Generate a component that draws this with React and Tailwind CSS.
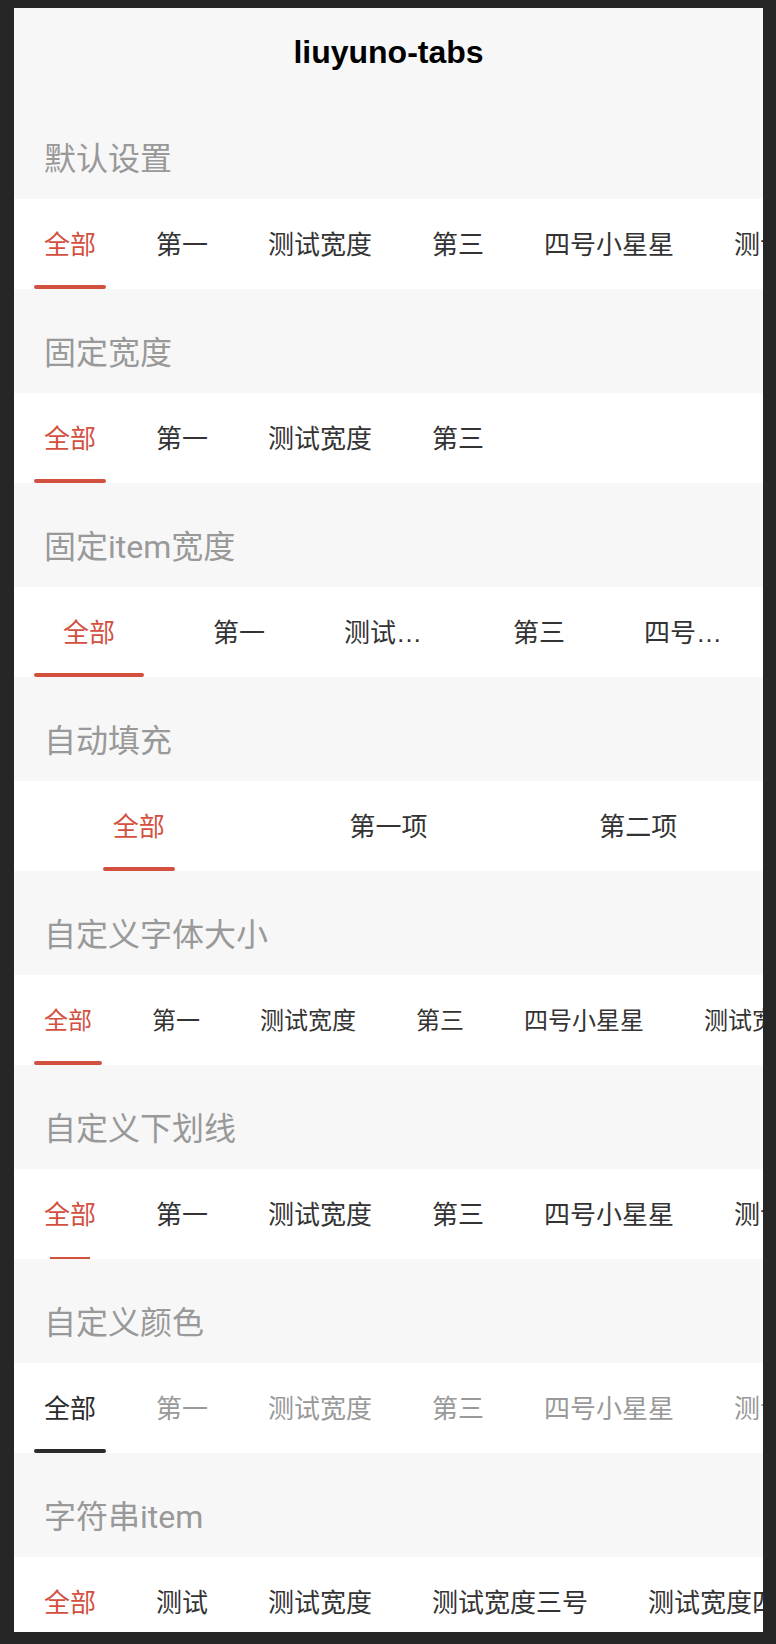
import React from "react";

const FONT = { fontFamily: 'Roboto, "Noto Sans CJK SC", "Noto Sans", sans-serif' };
const ELLIPSIS_FONT = { fontFamily: '"Liberation Sans", "Noto Sans CJK SC", sans-serif' };

const RED = "text-[#d3503f]";

function Label({ children }) {
  return (
    <div className="h-[104px] pt-[44px] pl-[30px] text-[32px] leading-[40px] text-[#999999]">
      {children}
    </div>
  );
}

function DefaultTabs({ items, size = "text-[26px]" }) {
  return (
    <div className="h-[90px] bg-white flex overflow-hidden">
      {items.map((t, i) => (
        <div
          key={i}
          className={`relative shrink-0 mx-[20px] px-[10px] pt-[2px] h-full flex items-center whitespace-nowrap ${size} leading-[36px] ${
            i === 0 ? RED : "text-[#333333]"
          }`}
        >
          {t}
          {i === 0 && (
            <div className="absolute bottom-0 left-0 right-0 h-[4px] rounded-full bg-[#d3503f]" />
          )}
        </div>
      ))}
    </div>
  );
}

function FixedItemTabs({ items }) {
  return (
    <div className="h-[90px] bg-white flex overflow-hidden">
      {items.map((t, i) => (
        <div
          key={i}
          className={`relative shrink-0 w-[110px] mx-[20px] px-[10px] pt-[2px] h-full flex items-center justify-center text-[26px] leading-[36px] ${
            i === 0 ? RED : "text-[#333333]"
          }`}
        >
          <span
            className="block w-full overflow-hidden text-ellipsis whitespace-nowrap text-center"
            style={ELLIPSIS_FONT}
          >
            {t}
          </span>
          {i === 0 && (
            <div className="absolute bottom-0 left-0 right-0 h-[4px] rounded-full bg-[#d3503f]" />
          )}
        </div>
      ))}
    </div>
  );
}

function FillTabs({ items }) {
  return (
    <div className="h-[90px] bg-white flex overflow-hidden">
      {items.map((t, i) => (
        <div key={i} className="flex-1 h-full flex justify-center">
          <div
            className={`relative px-[10px] pt-[2px] h-full flex items-center whitespace-nowrap text-[26px] leading-[36px] ${
              i === 0 ? RED : "text-[#333333]"
            }`}
          >
            {t}
            {i === 0 && (
              <div className="absolute bottom-0 left-0 right-0 h-[4px] rounded-full bg-[#d3503f]" />
            )}
          </div>
        </div>
      ))}
    </div>
  );
}

function LineTabs({ items }) {
  return (
    <div className="h-[90px] bg-white flex overflow-hidden">
      {items.map((t, i) => (
        <div
          key={i}
          className={`relative shrink-0 mx-[20px] px-[10px] pt-[2px] h-full flex items-center whitespace-nowrap text-[26px] leading-[36px] ${
            i === 0 ? RED : "text-[#333333]"
          }`}
        >
          {t}
          {i === 0 && (
            <div className="absolute bottom-0 left-1/2 -translate-x-1/2 w-[40px] h-[2px] bg-[#d3503f]" />
          )}
        </div>
      ))}
    </div>
  );
}

function ColorTabs({ items }) {
  return (
    <div className="h-[90px] bg-white flex overflow-hidden">
      {items.map((t, i) => (
        <div
          key={i}
          className={`relative shrink-0 mx-[20px] px-[10px] pt-[2px] h-full flex items-center whitespace-nowrap text-[26px] leading-[36px] ${
            i === 0 ? "text-[#2b2b2b]" : "text-[#999999]"
          }`}
        >
          {t}
          {i === 0 && (
            <div className="absolute bottom-0 left-0 right-0 h-[4px] rounded-full bg-[#2b2b2b]" />
          )}
        </div>
      ))}
    </div>
  );
}

const list = ["全部", "第一", "测试宽度", "第三", "四号小星星", "测试宽度六号", "第七"];

export default function App() {
  return (
    <div className="h-[1644px] bg-[#262626] pt-[8px] pl-[14px] pr-[13px] pb-[12px]" style={FONT}>
      <div className="h-[1624px] w-[749px] overflow-hidden bg-[#f7f7f7]">
        <div className="h-[87px] flex items-center justify-center">
          <h1
            className="text-[32px] font-bold text-black leading-[40px]"
            style={{ fontFamily: '"Liberation Sans", Arial, sans-serif' }}
          >
            liuyuno-tabs
          </h1>
        </div>

        <Label>默认设置</Label>
        <DefaultTabs items={list} />

        <Label>固定宽度</Label>
        <DefaultTabs items={["全部", "第一", "测试宽度", "第三"]} />

        <Label>固定item宽度</Label>
        <FixedItemTabs items={["全部", "第一", "测试宽度", "第三", "四号小星星", "测试宽度六号"]} />

        <Label>自动填充</Label>
        <FillTabs items={["全部", "第一项", "第二项"]} />

        <Label>自定义字体大小</Label>
        <DefaultTabs items={list} size="text-[24px]" />

        <Label>自定义下划线</Label>
        <LineTabs items={list} />

        <Label>自定义颜色</Label>
        <ColorTabs items={list} />

        <Label>字符串item</Label>
        <DefaultTabs items={["全部", "测试", "测试宽度", "测试宽度三号", "测试宽度四号", "测试宽度五号"]} />
      </div>
    </div>
  );
}
